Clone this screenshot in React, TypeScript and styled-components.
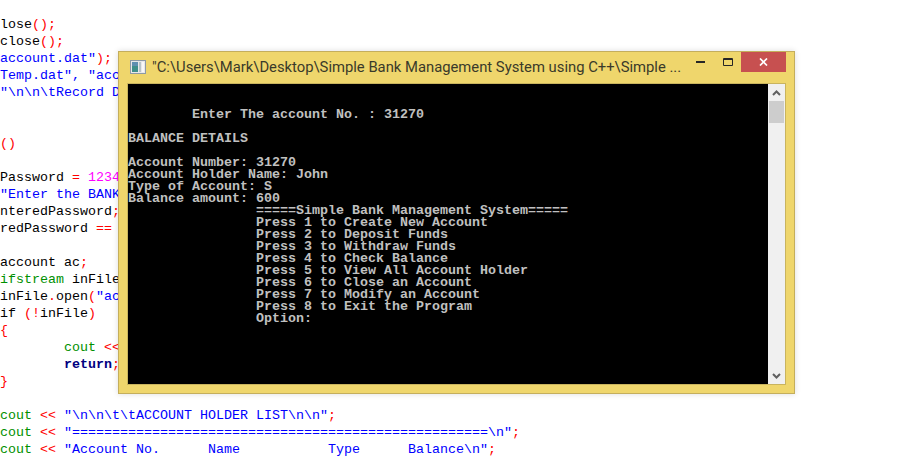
import React from 'react'
import styled, { createGlobalStyle } from 'styled-components'

type Kind = 'plain' | 'op' | 'str' | 'num' | 'type' | 'kw'
type Token = [Kind, string]

const tokenColors: Record<Kind, string> = {
  plain: '#000000',
  op: '#ff0000',
  str: '#0000ff',
  num: '#ff00ff',
  type: '#009000',
  kw: '#000080',
}

const Global = createGlobalStyle`
  html, body {
    margin: 0;
    height: 100%;
    background: #ffffff;
    overflow: hidden;
  }
`

const Page = styled.div`
  position: relative;
  width: 902px;
  height: 459px;
  overflow: hidden;
  background: #fff;
`

const Editor = styled.div`
  padding-top: 16px;
  font-family: 'Liberation Mono', monospace;
  font-size: 13.33px;
  line-height: 17px;
`

const CodeLine = styled.div`
  height: 17px;
  white-space: pre;
`

const Tok = styled.span<{ $kind: Kind }>`
  color: ${(p) => tokenColors[p.$kind]};
  font-weight: ${(p) => (p.$kind === 'kw' ? 'bold' : 'normal')};
`

const Window = styled.div`
  position: absolute;
  left: 118px;
  top: 51px;
  width: 677px;
  box-sizing: border-box;
  display: flex;
  flex-direction: column;
  padding: 0 9px 9px;
  background: #efd66c;
  border: 1px solid #c4ae5c;
  box-shadow: 0 0 6px rgba(0, 0, 0, 0.14);
`

const TitleBar = styled.div`
  display: flex;
  align-items: flex-start;
  height: 32px;
  margin-right: -1px;
`

const TitleIcon = styled.svg`
  width: 16px;
  height: 16px;
  margin: 7px 6px 0 2px;
  flex: none;
`

const TitleText = styled.div`
  flex: 1;
  min-width: 0;
  padding-top: 5px;
  font-family: Roboto, sans-serif;
  font-size: 14.8px;
  line-height: 20px;
  color: #3a3a2a;
  white-space: pre;
`

const CaptionButton = styled.div<{ $close?: boolean }>`
  flex: none;
  width: ${(p) => (p.$close ? '45px' : '27px')};
  height: 20px;
  display: flex;
  align-items: center;
  justify-content: center;
  background: ${(p) => (p.$close ? '#c75050' : 'transparent')};
`

const Body = styled.div`
  display: flex;
  height: 300px;
  box-shadow: 0 0 0 1px #c9b45e;
`

const Console = styled.pre`
  margin: 0;
  box-sizing: border-box;
  width: 640px;
  height: 300px;
  padding-top: 1px;
  overflow: hidden;
  background: #000;
  color: #c0c0c0;
  font-family: 'Liberation Mono', monospace;
  font-weight: bold;
  font-size: 13.33px;
  line-height: 12px;
`

const ScrollBar = styled.div`
  width: 17px;
  display: flex;
  flex-direction: column;
  background: #f0f0f0;
`

const ScrollArrow = styled.div`
  height: 17px;
  flex: none;
  display: flex;
  align-items: center;
  justify-content: center;
`

const ScrollThumb = styled.div`
  height: 22px;
  margin: 0 1px;
  background: #cdcdcd;
`

const ScrollTrack = styled.div`
  flex: 1;
`

const str = (s: string): Token => ['str', s]
const op = (s: string): Token => ['op', s]
const txt = (s: string): Token => ['plain', s]
const cout: Token[] = [['type', 'cout'], txt(' '), op('<<'), txt(' ')]

// only what shows to the left of the console window
const codeLines: Token[][] = [
  [txt('lose'), op('();')],
  [txt('close'), op('();')],
  [str('account.dat"'), op(');')],
  [str('Temp.dat", "acc')],
  [str('"\\n\\n\\tRecord D')],
  [],
  [],
  [op('()')],
  [],
  [txt('Password '), op('='), txt(' '), ['num', '1234']],
  [str('"Enter the BANK')],
  [txt('nteredPassword'), op(';')],
  [txt('redPassword '), op('==')],
  [],
  [txt('account ac'), op(';')],
  [['type', 'ifstream'], txt(' inFile')],
  [txt('inFile'), op('.'), txt('open'), op('('), str('"ac')],
  [txt('if '), op('(!'), txt('inFile'), op(')')],
  [op('{')],
  [txt('        '), ['type', 'cout'], txt(' '), op('<<')],
  [txt('        '), ['kw', 'return'], op(';')],
  [op('}')],
  [],
  [...cout, str('"\\n\\n\\t\\tACCOUNT HOLDER LIST\\n\\n"'), op(';')],
  [...cout, str('"' + '='.repeat(52) + '\\n"'), op(';')],
  [...cout, str('"Account No.      Name           Type      Balance\\n"'), op(';')],
]

const consoleText = `

        Enter The account No. : 31270

BALANCE DETAILS

Account Number: 31270
Account Holder Name: John
Type of Account: S
Balance amount: 600
                =====Simple Bank Management System=====
                Press 1 to Create New Account
                Press 2 to Deposit Funds
                Press 3 to Withdraw Funds
                Press 4 to Check Balance
                Press 5 to View All Account Holder
                Press 6 to Close an Account
                Press 7 to Modify an Account
                Press 8 to Exit the Program
                Option:`

export default function App() {
  return (
    <Page>
      <Global />
      <Editor>
        {codeLines.map((line, i) => (
          <CodeLine key={i}>
            {line.map(([kind, text], j) => (
              <Tok key={j} $kind={kind}>
                {text}
              </Tok>
            ))}
          </CodeLine>
        ))}
      </Editor>
      <Window>
        <TitleBar>
          <TitleIcon viewBox="0 0 16 16">
            <rect x="0.5" y="1.5" width="15" height="13" fill="#e8e8e8" stroke="#8d9aa6" />
            <rect x="2" y="3" width="6" height="10" fill="#3f8f8a" />
            <rect x="2" y="3" width="6" height="4" fill="#5f8fb0" />
            <rect x="9" y="3" width="2" height="10" fill="#b8c4c8" />
            <rect x="12" y="3" width="2" height="10" fill="#f8f8f8" />
          </TitleIcon>
          <TitleText>"C:\Users\Mark\Desktop\Simple Bank Management System using C++\Simple ...</TitleText>
          <CaptionButton>
            <svg width="9" height="2" viewBox="0 0 9 2">
              <rect width="9" height="2" fill="#262626" />
            </svg>
          </CaptionButton>
          <CaptionButton>
            <svg width="10" height="8" viewBox="0 0 10 8">
              <path d="M0.5 0.5H9.5V7.5H0.5Z M0.5 1.5H9.5" fill="none" stroke="#262626" />
            </svg>
          </CaptionButton>
          <CaptionButton $close>
            <svg width="9" height="8" viewBox="0 0 9 8">
              <path d="M1 0.5L8 7.5M8 0.5L1 7.5" stroke="#fff" strokeWidth="1.7" />
            </svg>
          </CaptionButton>
        </TitleBar>
        <Body>
          <Console>{consoleText}</Console>
          <ScrollBar>
            <ScrollArrow>
              <svg width="9" height="6" viewBox="0 0 9 6">
                <path d="M1 5L4.5 1.5L8 5" fill="none" stroke="#606060" strokeWidth="2" />
              </svg>
            </ScrollArrow>
            <ScrollThumb />
            <ScrollTrack />
            <ScrollArrow>
              <svg width="9" height="6" viewBox="0 0 9 6">
                <path d="M1 1L4.5 4.5L8 1" fill="none" stroke="#606060" strokeWidth="2" />
              </svg>
            </ScrollArrow>
          </ScrollBar>
        </Body>
      </Window>
    </Page>
  )
}
